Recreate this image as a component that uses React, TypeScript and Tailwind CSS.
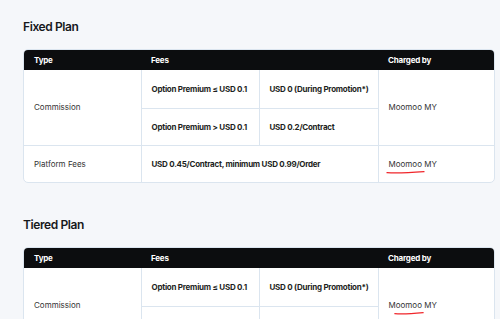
import React from "react"

type FeeRow = { cond: string; fee: string }

function Scribble({ className }: { className: string }) {
  return <svg className={`absolute pointer-events-none ${className}`} viewBox="0 0 40 4" preserveAspectRatio="none">
    <path d="M1 2.6 C10 3.2 22 2.8 39 1.6" stroke="#f0262b" strokeWidth="1.2" fill="none" strokeLinecap="round" />
  </svg>
}

function PlanTable({ rows, platform, mark }: { rows: FeeRow[]; platform?: boolean; mark: 'platform' | 'commission' }) {
  const cell = "border-[#dbe5ef] px-[10px] align-middle whitespace-nowrap"
  const bold = "font-bold text-[#1d1f22] tracking-[-0.25px]"
  return <div className="w-[472px] rounded-[5px] border border-[#dbe5ef] bg-white overflow-hidden">
    <table className="w-full border-collapse table-fixed text-[8px] leading-[10px]">
      <colgroup>
        <col className="w-[117px]" />
        <col className="w-[118px]" />
        <col className="w-[119px]" />
        <col />
      </colgroup>
      <thead>
        <tr className="h-[20px] bg-[#0c0d0f] text-white text-left">
          <th className="px-[10px] font-bold tracking-[-0.2px]">Type</th>
          <th colSpan={2} className="px-[10px] font-bold tracking-[-0.2px]">Fees</th>
          <th className="px-[10px] font-bold tracking-[-0.2px]">Charged by</th>
        </tr>
      </thead>
      <tbody>
        {rows.map((r, i) => <tr key={i} className={i === 0 ? "h-[38px]" : "h-[37px]"}>
          {i === 0 && <td rowSpan={rows.length} className={`${cell} border-r border-b text-[#333]`}>Commission</td>}
          <td className={`${cell} border-r border-b ${bold}`}>{r.cond}</td>
          <td className={`${cell} border-r border-b ${bold}`}>{r.fee}</td>
          {i === 0 && <td rowSpan={rows.length} className={`${cell} border-b text-[#333]`}>
            <span className="relative inline-block">
              Moomoo MY
              {mark === 'commission' && <Scribble className="left-[5px] top-[11px] w-[30px] h-[4px]" />}
            </span>
          </td>}
        </tr>)}
        {platform && <tr className="h-[37px]">
          <td className={`${cell} border-r text-[#333]`}>Platform Fees</td>
          <td colSpan={2} className={`${cell} border-r ${bold}`}>USD 0.45/Contract, minimum USD 0.99/Order</td>
          <td className={`${cell} text-[#333]`}>
            <span className="relative inline-block">
              Moomoo MY
              {mark === 'platform' && <Scribble className="-left-[3px] top-[11px] w-[39px] h-[4px]" />}
            </span>
          </td>
        </tr>}
      </tbody>
    </table>
  </div>
}

export default function App() {
  const rows: FeeRow[] = [
    { cond: "Option Premium ≤ USD 0.1", fee: "USD 0 (During Promotion*)" },
    { cond: "Option Premium > USD 0.1", fee: "USD 0.2/Contract" },
  ]
  return <div className="bg-[#f5f7fa] pl-[23px] pt-[19px] font-['Inter',sans-serif] overflow-hidden h-[319px]">
    <h2 className="text-[12px] font-semibold text-[#17191c] leading-[16px] tracking-[-0.4px]">Fixed Plan</h2>
    <div className="mt-[14px]">
      <PlanTable rows={rows} platform mark="platform" />
    </div>
    <h2 className="mt-[34px] text-[12px] font-semibold text-[#17191c] leading-[16px] tracking-[-0.4px]">Tiered Plan</h2>
    <div className="mt-[14px]">
      <PlanTable rows={rows} mark="commission" />
    </div>
  </div>
}
